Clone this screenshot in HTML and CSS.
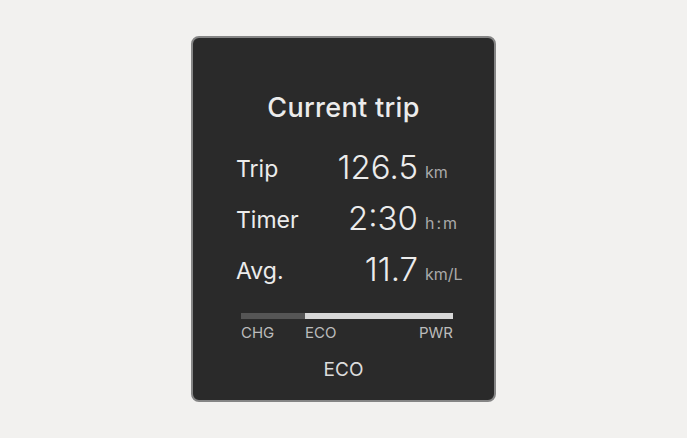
FILE: index.html
```html
<!DOCTYPE html>
<html lang="en">
<head>
  <meta charset="UTF-8" />
  <meta name="viewport" content="width=device-width, initial-scale=1.0"/>
  <title>Current trip</title>
  <link rel="stylesheet" href="styles.css">
</head>
<body>
  <div class="panel">
    <h2 class="title">Current trip</h2>

    <div class="rows">
      <span class="label">Trip</span>
      <span class="value">126.5</span>
      <span class="unit">km</span>

      <span class="label">Timer</span>
      <span class="value">2:30</span>
      <span class="unit">h<span class="colon">:</span>m</span>

      <span class="label">Avg.</span>
      <span class="value">11.7</span>
      <span class="unit">km/L</span>
    </div>

    <div class="gauge">
      <div class="bar">
        <div class="bar-chg"></div>
        <div class="bar-eco"></div>
      </div>
      <div class="gauge-labels">
        <span class="chg">CHG</span>
        <span class="eco">ECO</span>
        <span class="pwr">PWR</span>
      </div>
    </div>

    <div class="mode">ECO</div>
  </div>
</body>
</html>
```

FILE: styles.css
```css
html, body {
  margin: 0;
  height: 100%;
}
body {
  font-family: Inter, Roboto, sans-serif;
  background: #f2f1ef;
  display: flex;
  align-items: center;
  justify-content: center;
}
.panel {
  box-sizing: border-box;
  width: 305px;
  height: 366px;
  background: #2a2a2a;
  border: 2px solid #858585;
  border-radius: 8px;
  color: #ececec;
  padding-top: 54px;
}
.title {
  margin: 0;
  text-align: center;
  font-size: 27px;
  font-weight: 500;
  line-height: 32px;
  letter-spacing: 0.3px;
}
.rows {
  display: grid;
  grid-template-columns: 1fr auto 43px;
  grid-auto-rows: 51px;
  column-gap: 7px;
  align-items: center;
  margin: 17px 26px 0 43px;
}
.label {
  font-size: 23px;
  line-height: 30px;
  padding-top: 5px;
}
.value {
  font-size: 33px;
  font-weight: 300;
  line-height: 36px;
  text-align: right;
}
.unit {
  font-size: 16px;
  line-height: 18px;
  padding-top: 10px;
  color: #a9a9a9;
  white-space: nowrap;
}
.colon {
  margin: 0 2px;
}
.gauge {
  margin: 19px 0 0 48px;
  width: 212px;
}
.bar {
  display: flex;
  height: 6px;
}
.bar-chg {
  width: 64px;
  background: #555555;
}
.bar-eco {
  flex: 1;
  background: #d7d7d7;
}
.gauge-labels {
  display: flex;
  font-size: 15px;
  line-height: 18px;
  color: #bcbcbc;
  margin-top: 5px;
}
.gauge-labels .chg {
  width: 64px;
}
.gauge-labels .pwr {
  margin-left: auto;
}
.mode {
  text-align: center;
  font-size: 19px;
  line-height: 22px;
  margin-top: 17px;
  color: #dcdcdc;
}
```
